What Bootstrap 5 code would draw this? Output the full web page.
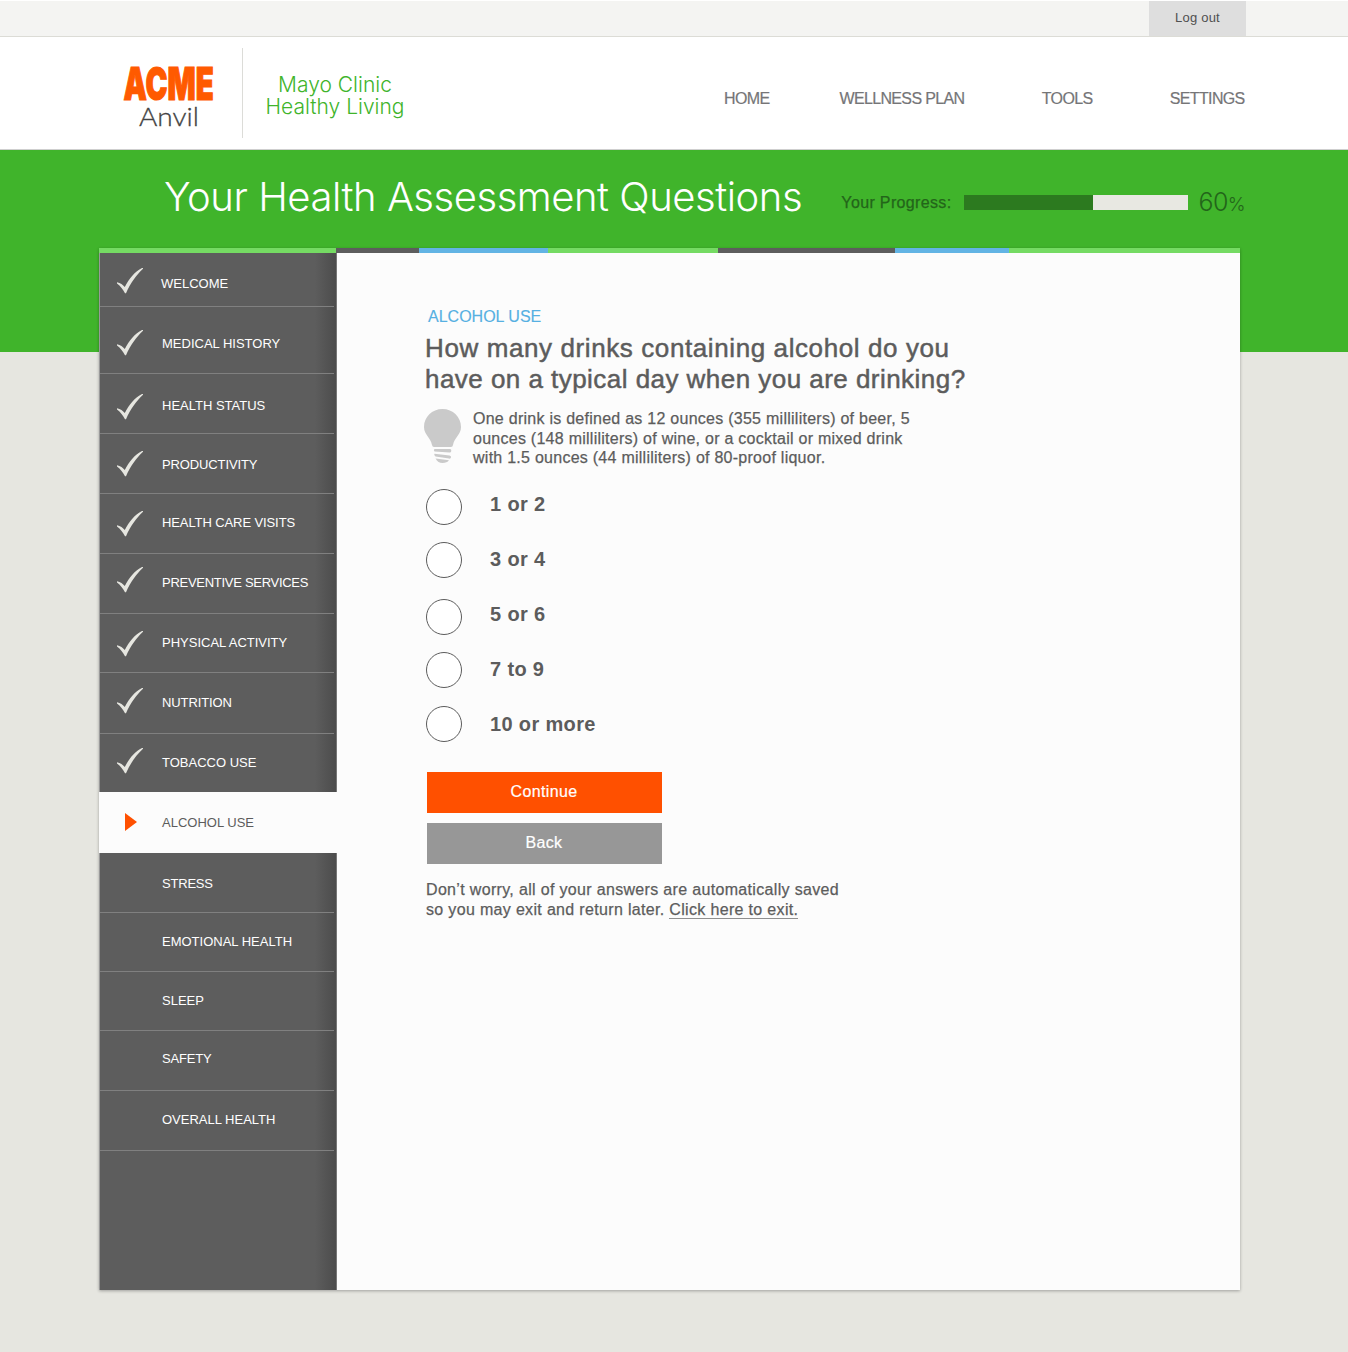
<!DOCTYPE html>
<html lang="en">
<head>
<meta charset="utf-8">
<meta name="viewport" content="width=device-width, initial-scale=1">
<title>Your Health Assessment Questions</title>
<link href="https://cdn.jsdelivr.net/npm/bootstrap@5.3.0/dist/css/bootstrap.min.css" rel="stylesheet">
<style>
body{font-family:"Liberation Sans",Arial,sans-serif;background:#e6e6e0;color:#5c5c5c;min-height:1352px;font-size:16px}
.utility{height:37px;background:#f4f4f2;border-top:1px solid #fff;border-bottom:1px solid #dcdcd6;padding-right:102px}
.logout{width:97px;background:#dedede;color:#505050;font-size:13px;letter-spacing:.2px;line-height:34px}
.masthead{height:113px;background:#fff;border-bottom:1px solid #cfcfcf;padding:0 104px 0 120px}
.logo-box{width:123px;height:90px;border-right:1px solid #dcdcd8;margin-top:11px}
.logo-box svg{overflow:visible}
.program{width:184px;margin-top:37px;color:#40b42b;font-family:Inter,"Liberation Sans",sans-serif;font-weight:300;font-size:21px;line-height:21.5px}
.main-nav{gap:78px;margin-top:52px}
.main-nav a{color:#757577;font-size:16px;line-height:20px;letter-spacing:-.65px;margin-right:-.65px;-webkit-text-stroke:.2px}
.main-nav a:first-child{margin-right:-8px}
.hero{height:202px;background:#40b42b;padding:0 103px 0 164px}
.hero h1{font-family:Inter,"Liberation Sans",sans-serif;font-weight:300;font-size:40px;letter-spacing:-.46px;line-height:48px;color:#fff;margin-top:23px}
.prog-row{color:#23651a;margin-top:40px;height:25px}
.prog-label{-webkit-text-stroke:.25px;letter-spacing:.35px;line-height:25px}
.progress.meter{width:224px;height:15px;border-radius:0;background:#e8e8e2;margin-left:12px}
.meter .progress-bar{background:#2c7a1f}
.pct{font-family:Inter,sans-serif;font-weight:300;font-size:25px;line-height:27px;margin-left:11px;margin-top:2px;letter-spacing:-.6px}
.pct span{font-size:19px}
.panel{width:1141px;margin:-104px 0 0 99px;box-shadow:0 1px 3px rgba(0,0,0,.3)}
.strip{height:5px;display:grid;grid-template-columns:237px 83px 129px 170px 177px 114px 231px}
.c-green{background:#75db63}.c-gray{background:#5d5d5d}.c-blue{background:#62b4e4}
.panel-body{height:1037px}
.side{width:238px;border-left:1px solid #999;border-right:1px solid #777;background:linear-gradient(90deg,#5d5d5d 0,#5d5d5d 215px,#4c4c4c 236px)}
.steps{display:grid;grid-template-rows:54px 67px 60px 60px 60px 60px 59px 61px 58px 61px 60px 59px 59px 60px 60px;margin:0}
.steps li{display:flex;align-items:flex-start;border-bottom:1px solid #808080;margin-right:2px;padding-left:17px;color:#fff;font-size:13px;line-height:18px}
.steps li svg,.steps li i{width:26px;height:26px;margin-top:var(--i,0);flex:none}
.steps li span{margin-top:var(--t);margin-left:19px}
.steps li:nth-child(1){--i:15px;--t:22px}
.steps li:nth-child(1) span{margin-left:18px}
.steps li:nth-child(2){--i:23px;--t:28px}
.steps li:nth-child(3){--i:20px;--t:23px}
.steps li:nth-child(4){--i:17px;--t:22px;letter-spacing:-.12px}
.steps li:nth-child(5){--i:17px;--t:20px;letter-spacing:-.1px}
.steps li:nth-child(6){--i:13px;--t:20px;letter-spacing:-.28px}
.steps li:nth-child(7){--i:17px;--t:20px}
.steps li:nth-child(8){--i:15px;--t:21px;letter-spacing:-.1px}
.steps li:nth-child(9){--i:14px;--t:20px;border:0}
.steps li:nth-child(10){--i:21px;--t:22px;background:#fcfcfc;color:#5c5c5c;border:0;margin:0 -1px;padding-left:18px}
.steps li:nth-child(11){--t:22px;letter-spacing:-.2px}
.steps li:nth-child(12),.steps li:nth-child(13),.steps li:nth-child(15){--t:20px}
.steps li:nth-child(14){--t:19px;letter-spacing:-.2px}
.question{background:#fcfcfc;padding:54px 0 0 88px}
.topic{color:#56b0e2;font-size:16px;line-height:20px;margin:0 0 6px 3px;-webkit-text-stroke:.15px}
.question h2{font-size:26px;line-height:31px;letter-spacing:.6px;margin:0;-webkit-text-stroke:.5px;font-weight:400}
.question h2 .line-b{letter-spacing:.46px}
.tip{margin-top:14px;line-height:19.5px;letter-spacing:.26px;-webkit-text-stroke:.25px}
.tip svg{width:37px;height:54px;margin-left:-1px;margin-right:12px}
.choices{margin:9px 0 0 1px}
.choices label{height:55px;display:flex;align-items:flex-start;font-weight:700;font-size:20px;line-height:54px;letter-spacing:.35px}
.choices .form-check-input{width:36px;height:36px;border:1px solid #5c5c5c;background:#fff;margin:var(--r) 28px 0 0}
.choices label:nth-child(1),.choices label:nth-child(3){--r:12px}
.choices label:nth-child(2),.choices label:nth-child(4){--r:10px}
.choices label:nth-child(5){--r:9px}
.actions{width:235px;margin:20px 0 0 2px;gap:10px}
.actions .btn{height:41px;border:0;border-radius:0;color:#fff;padding:0 1px 2px 0;letter-spacing:.35px;-webkit-text-stroke:.2px;line-height:39px}
.btn.go{background:#ff5000}.btn.bk{background:#979797}
.note{margin:16px 0 0 1px;line-height:20px;-webkit-text-stroke:.25px;letter-spacing:.33px}
.note a{color:inherit;text-decoration:none;border-bottom:1px solid #8f8f8f;display:inline-block;line-height:17px}
</style>
</head>
<body>
<svg width="0" height="0" class="d-none"><symbol id="tick" viewBox="0 0 26 26"><path d="M0 14.200C3.500 15.200 5.800 16.600 7.800 19C12 10.500 18 3.500 25 0H26V.8C19 7.500 13.500 15 9 25.200H8C6 21.500 3.500 18 0 15.500Z" fill="#e6e6e0"/></symbol></svg>
<div class="utility d-flex justify-content-end"><a href="#" class="logout text-center text-decoration-none">Log out</a></div>
<header class="masthead d-flex align-items-start">
  <div class="logo-box"><svg width="110" height="89" viewBox="120 48 110 89" role="img" aria-label="ACME Anvil"><text transform="translate(123.500 99.800) scale(.645 1)" font-family="Inter" font-weight="900" font-size="45" textLength="140" lengthAdjust="spacingAndGlyphs" fill="#ff5a00" stroke="#ff5a00" stroke-width="1.200">ACME</text><text x="139" y="126" font-family="Lato" font-weight="300" font-size="25" textLength="60" lengthAdjust="spacingAndGlyphs" fill="#444" stroke="#444" stroke-width=".3">Anvil</text></svg></div>
  <div class="program text-center">Mayo Clinic<br>Healthy Living</div>
  <nav class="main-nav d-flex ms-auto">
    <a class="text-decoration-none" href="#">HOME</a>
    <a class="text-decoration-none" href="#">WELLNESS PLAN</a>
    <a class="text-decoration-none" href="#">TOOLS</a>
    <a class="text-decoration-none" href="#">SETTINGS</a>
  </nav>
</header>
<section class="hero d-flex align-items-start justify-content-between">
  <h1 class="text-nowrap">Your Health Assessment Questions</h1>
  <div class="prog-row d-flex align-items-center">
    <span class="prog-label">Your Progress:</span>
    <div class="progress meter"><div class="progress-bar" style="width:58%"></div></div>
    <div class="pct">60<span>%</span></div>
  </div>
</section>
<main class="panel position-relative">
  <div class="strip"><div class="c-green"></div><div class="c-gray"></div><div class="c-blue"></div><div class="c-green"></div><div class="c-gray"></div><div class="c-blue"></div><div class="c-green"></div></div>
  <div class="panel-body d-flex">
    <aside class="side flex-shrink-0">
      <ul class="steps list-unstyled">
        <li><svg><use href="#tick"/></svg><span>WELCOME</span></li>
        <li><svg><use href="#tick"/></svg><span>MEDICAL HISTORY</span></li>
        <li><svg><use href="#tick"/></svg><span>HEALTH STATUS</span></li>
        <li><svg><use href="#tick"/></svg><span>PRODUCTIVITY</span></li>
        <li><svg><use href="#tick"/></svg><span>HEALTH CARE VISITS</span></li>
        <li><svg><use href="#tick"/></svg><span>PREVENTIVE SERVICES</span></li>
        <li><svg><use href="#tick"/></svg><span>PHYSICAL ACTIVITY</span></li>
        <li><svg><use href="#tick"/></svg><span>NUTRITION</span></li>
        <li><svg><use href="#tick"/></svg><span>TOBACCO USE</span></li>
        <li><svg viewBox="0 0 26 26"><path d="M8 0L20 9L8 18Z" fill="#ff5000"/></svg><span>ALCOHOL USE</span></li>
        <li><i></i><span>STRESS</span></li>
        <li><i></i><span>EMOTIONAL HEALTH</span></li>
        <li><i></i><span>SLEEP</span></li>
        <li><i></i><span>SAFETY</span></li>
        <li><i></i><span>OVERALL HEALTH</span></li>
      </ul>
    </aside>
    <section class="question flex-grow-1">
      <p class="topic">ALCOHOL USE</p>
      <h2>How many drinks containing alcohol do you<br><span class="line-b">have on a typical day when you are drinking?</span></h2>
      <div class="tip d-flex">
        <svg viewBox="0 0 37 54" fill="#cacaca"><path d="M18.500 0C29 0 37 8 37 18C37 26 30.500 28 29 36Q28.700 38 27 38H10Q8.300 38 8 36C6.500 28 0 26 0 18C0 8 8 0 18.500 0Z"/><path d="M11 40H26Q27.500 40 27.300 42Q27 43.600 25.500 43.500L10.500 42.500Q9 40.500 11 40Z"/><path d="M10.500 44.800L25.500 46.500Q27.500 47 27 48.500T25 49.500L11.500 47.500Q9.500 46 10.500 44.800Z"/><path d="M11.500 49.500L25 51.300Q23 54 18.500 54T11.500 49.500Z"/></svg>
        <div>One drink is defined as 12 ounces (355 milliliters) of beer, 5<br>ounces (148 milliliters) of wine, or a cocktail or mixed drink<br>with 1.5 ounces (44 milliliters) of 80-proof liquor.</div>
      </div>
      <div class="choices">
        <label><input class="form-check-input" type="radio" name="drinks">1 or 2</label>
        <label><input class="form-check-input" type="radio" name="drinks">3 or 4</label>
        <label><input class="form-check-input" type="radio" name="drinks">5 or 6</label>
        <label><input class="form-check-input" type="radio" name="drinks">7 to 9</label>
        <label><input class="form-check-input" type="radio" name="drinks">10 or more</label>
      </div>
      <div class="actions d-flex flex-column"><button class="btn go">Continue</button><button class="btn bk">Back</button></div>
      <p class="note">Don’t worry, all of your answers are automatically saved<br>so you may exit and return later. <a href="#">Click here to exit.</a></p>
    </section>
  </div>
</main>
<script src="https://cdn.jsdelivr.net/npm/bootstrap@5.3.0/dist/js/bootstrap.bundle.min.js"></script>
</body>
</html>
